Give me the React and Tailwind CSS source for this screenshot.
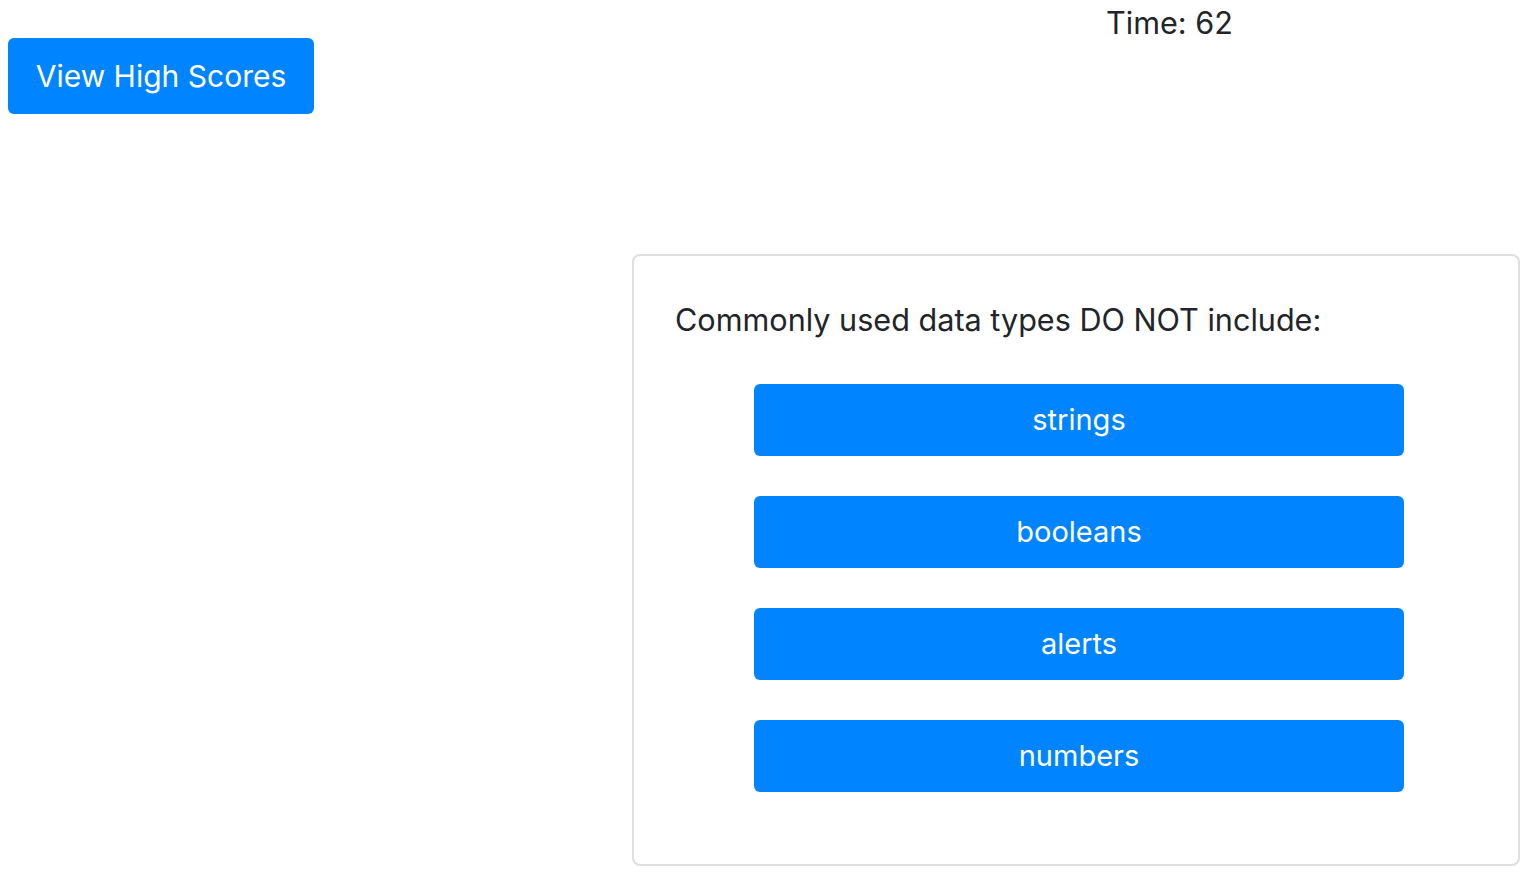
const ANSWERS = ['strings', 'booleans', 'alerts', 'numbers']

export default function App() {
  return (
    <div className="min-h-screen bg-white text-[#212529]" style={{ fontFamily: 'Inter, "Noto Sans", sans-serif' }}>
      <div className="h-[38px] pl-[1106px] text-[30.6px] leading-[46px]">Time: 62</div>
      <div className="pl-2">
        <button className="h-[76px] w-[306px] rounded-[6px] bg-[#0084ff] text-[30px] text-white">
          View High Scores
        </button>
      </div>
      <div className="ml-[632px] mt-[140px] w-[888px] h-[612px] rounded-[8px] border-2 border-[#dfdfdf] px-[41px] pt-[43px]">
        <p className="text-[30.6px] leading-[42px]">Commonly used data types DO NOT include:</p>
        <div className="mt-[43px] flex flex-col items-center gap-[40px] pl-[6px]">
          {ANSWERS.map(a => (
            <button key={a} className="h-[72px] w-[650px] rounded-[6px] bg-[#0084ff] text-[29px] text-white">
              {a}
            </button>
          ))}
        </div>
      </div>
    </div>
  )
}
